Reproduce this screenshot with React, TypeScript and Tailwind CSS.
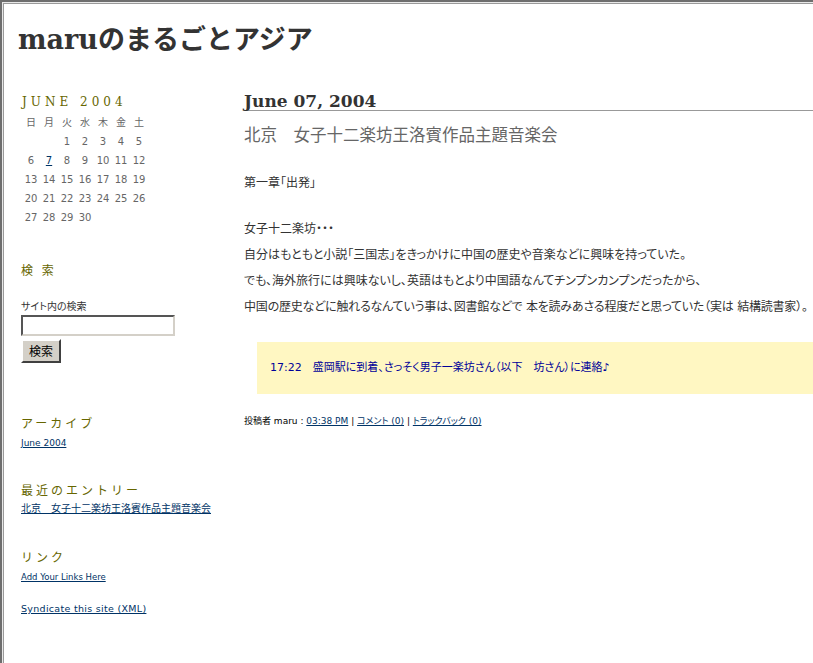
const jp = "font-['DejaVu_Sans','Noto_Sans_CJK_JP',sans-serif] [font-feature-settings:'palt']";
const head = "font-['Noto_Sans_CJK_JP',sans-serif] text-[#666600] text-[12px] leading-[16px] tracking-[3px]";
const link = "text-[#003366] underline";

const days = ["日", "月", "火", "水", "木", "金", "土"];
const cells: (number | null)[] = [null, null, ...Array.from({ length: 30 }, (_, i) => i + 1)];

function Calendar() {
  return (
    <div>
      <div className="font-['DejaVu_Serif',serif] text-[12px] leading-[16px] tracking-[4px] text-[#666600] pl-px">
        JUNE 2004
      </div>
      <div className={`mt-[3px] grid grid-cols-7 w-[126px] ml-px text-[10px] text-[#666666] text-center ${jp}`}>
        {days.map((d) => (
          <div key={d} className="h-[19px] leading-[19px]">{d}</div>
        ))}
        {cells.map((c, i) => (
          <div key={i} className="h-[19px] leading-[19px]">
            {c === 7 ? <a className={link}>7</a> : c}
          </div>
        ))}
      </div>
    </div>
  );
}

function Sidebar() {
  return (
    <aside className="w-[240px] shrink-0 pl-[17px] pt-[89px]">
      <Calendar />

      <div className={`${head} mt-[35px]`}>検 索</div>
      <div className={`mt-[22px] text-[10px] leading-[13px] text-[#333] ${jp}`}>サイト内の検索</div>
      <input
        className="mt-[2px] block w-[154px] h-[21px] bg-white border-2 border-t-[#555] border-l-[#555] border-b-[#d4d0c8] border-r-[#d4d0c8]"
        type="text"
      />
      <button className="mt-[3px] block w-[40px] h-[24px] bg-[#d4d0c8] border-2 border-t-white border-l-white border-b-[#404040] border-r-[#404040] text-[12px] text-black font-['Noto_Sans_CJK_JP',sans-serif]">
        検索
      </button>

      <div className={`${head} mt-[52px]`}>アーカイブ</div>
      <div className={`mt-[6px] text-[9px] leading-[12px] ${jp}`}>
        <a className={link}>June 2004</a>
      </div>

      <div className={`${head} mt-[33px]`}>最近のエントリー</div>
      <div className={`mt-[5px] text-[10px] leading-[12px] ${jp}`}>
        <a className={link}>北京　女子十二楽坊王洛賓作品主題音楽会</a>
      </div>

      <div className={`${head} mt-[34px]`}>リンク</div>
      <div className={`mt-[6px] text-[8.5px] leading-[12px] ${jp}`}>
        <a className={link}>Add Your Links Here</a>
      </div>
      <div className={`mt-[20px] text-[9.5px] leading-[12px] tracking-[0.3px] ${jp}`}>
        <a className={link}>Syndicate this site (XML)</a>
      </div>
    </aside>
  );
}

function Entry() {
  return (
    <main className="w-[640px] shrink-0 pt-[88px]">
      <h2 className="font-['DejaVu_Serif',serif] font-bold text-[17px] leading-[17px] text-[#333] border-b border-[#999]">
        June 07, 2004
      </h2>
      <h3 className={`mt-[15px] text-[16.5px] leading-[20px] text-[#666666] ${jp}`}>
        北京　女子十二楽坊王洛賓作品主題音楽会
      </h3>

      <div className={`text-[12px] leading-[26px] text-[#333] ${jp}`}>
        <p className="mt-[24px]">第一章「出発」</p>
        <p className="mt-[20px]">女子十二楽坊・・・</p>
        <p>自分はもともと小説「三国志」をきっかけに中国の歴史や音楽などに興味を持っていた。</p>
        <p>でも、海外旅行には興味ないし、英語はもとより中国語なんてチンプンカンプンだったから、</p>
        <p className="tracking-[-0.2px]">
          中国の歴史などに触れるなんていう事は、図書館などで 本を読みあさる程度だと思っていた（実は 結構読書家）。
        </p>
      </div>

      <div className="mt-[22px] ml-[13px] h-[52px] bg-[#fff7c2] flex items-center pl-[13px]">
        <span className={`text-[11px] text-[#000099] ${jp}`}>
          17:22　盛岡駅に到着、さっそく男子一楽坊さん（以下　坊さん）に連絡♪
        </span>
      </div>

      <div className={`mt-[20px] text-[9px] leading-[14px] text-black ${jp}`}>
        投稿者 maru : <a className={link}>03:38 PM</a> | <a className={link}>コメント (0)</a> |{" "}
        <a className={link}>トラックバック (0)</a>
      </div>
    </main>
  );
}

export default function App() {
  return (
    <div className="w-[813px] h-[663px] overflow-hidden bg-white border-t-2 border-l-2 border-[#6e6e6e]">
      <div className="h-full pt-px pl-px bg-[#e8e8e8]">
        <div className="h-full bg-white border-t border-l border-[#9a9a9a] overflow-hidden">
          <header className="pt-[20px] pl-[14px]">
            <h1 className="font-['DejaVu_Serif','Noto_Sans_CJK_JP',serif] font-bold text-[27px] leading-[32px] text-[#333]">
              maruのまるごとアジア
            </h1>
          </header>
          <div className="flex -mt-[51px]">
            <Sidebar />
            <Entry />
          </div>
        </div>
      </div>
    </div>
  );
}
